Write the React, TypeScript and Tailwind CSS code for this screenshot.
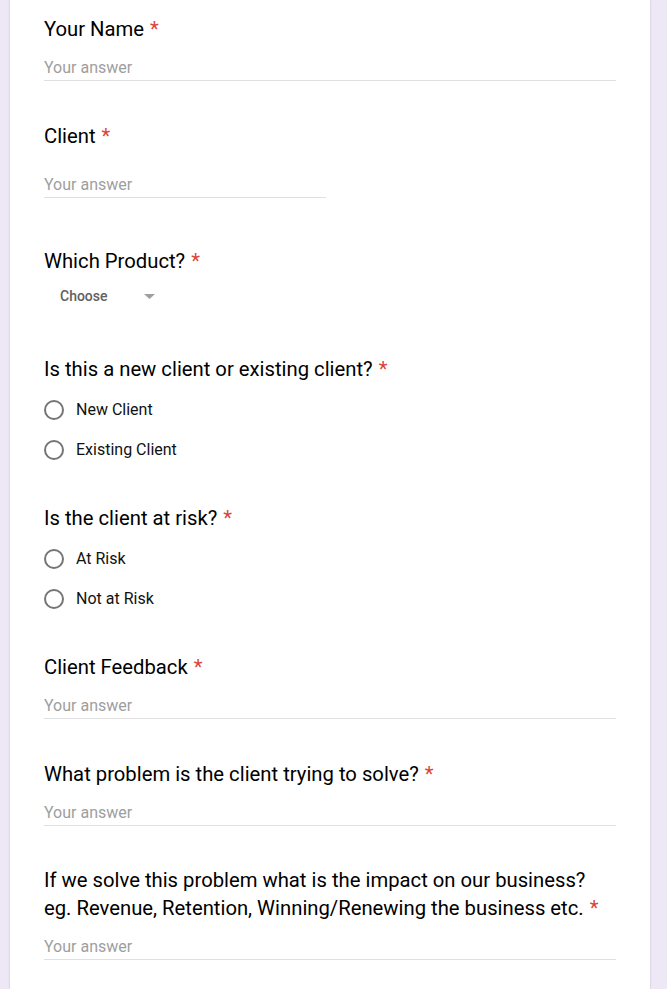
import React from 'react'

const Title = ({ children, className = '' }: { children: React.ReactNode; className?: string }) => (
  <div className={`text-[20.25px] leading-[28px] text-black ${className}`}>
    {children}
    <span className="ml-[6px] text-[#db4437]">*</span>
  </div>
)

const TextAnswer = ({ half = false, className = '' }: { half?: boolean; className?: string }) => (
  <div
    className={`h-[25px] border-b border-[#e0e0e0] text-[16px] leading-[24px] text-[#9e9e9e] ${half ? 'w-[282px]' : 'w-full'} ${className}`}
  >
    Your answer
  </div>
)

const Radio = ({ label }: { label: string }) => (
  <div className="flex h-[40px] items-center">
    <span className="h-[20px] w-[20px] rounded-full border-2 border-[#757575]" />
    <span className="ml-[12px] text-[16px] leading-[24px] text-[#111]">{label}</span>
  </div>
)

const App = () => {
  return (
    <div className="min-h-[989px] bg-[#ede7f6]" style={{ fontFamily: 'Roboto, "Liberation Sans", sans-serif' }}>
      <div className="ml-[10px] min-h-[989px] w-[640px] bg-white px-[34px] pt-[15px] shadow-[0_0_2px_rgba(0,0,0,0.18)]">
        {/* Your Name */}
        <Title>Your Name</Title>
        <TextAnswer className="mt-[13px]" />

        {/* Client */}
        <Title className="mt-[41px]">Client</Title>
        <TextAnswer half className="mt-[23px]" />

        {/* Which Product */}
        <Title className="mt-[49px]">Which Product?</Title>
        <div className="mt-[11px] flex h-[20px] items-center pl-[16px]">
          <span className="text-[14px] font-medium leading-[20px] text-[#616161]">Choose</span>
          <svg width="11" height="5" viewBox="0 0 11 5" className="ml-[36px]">
            <polygon points="0,0 11,0 5.5,5" fill="#a0a0a0" />
          </svg>
        </div>

        {/* New or existing */}
        <Title className="mt-[49px]">Is this a new client or existing client?</Title>
        <div className="mt-[7px]">
          <Radio label="New Client" />
          <Radio label="Existing Client" />
        </div>

        {/* Risk */}
        <Title className="mt-[34px]">Is the client at risk?</Title>
        <div className="mt-[7px]">
          <Radio label="At Risk" />
          <Radio label="Not at Risk" />
        </div>

        {/* Feedback */}
        <Title className="mt-[34px]">Client Feedback</Title>
        <TextAnswer className="mt-[13px]" />

        <Title className="mt-[41px]">What problem is the client trying to solve?</Title>
        <TextAnswer className="mt-[13px]" />

        <Title className="mt-[40px]">
          If we solve this problem what is the impact on our business?
          <br />
          eg. Revenue, Retention, Winning/Renewing the business etc.
        </Title>
        <TextAnswer className="mt-[13px]" />
      </div>
    </div>
  )
}

export default App
